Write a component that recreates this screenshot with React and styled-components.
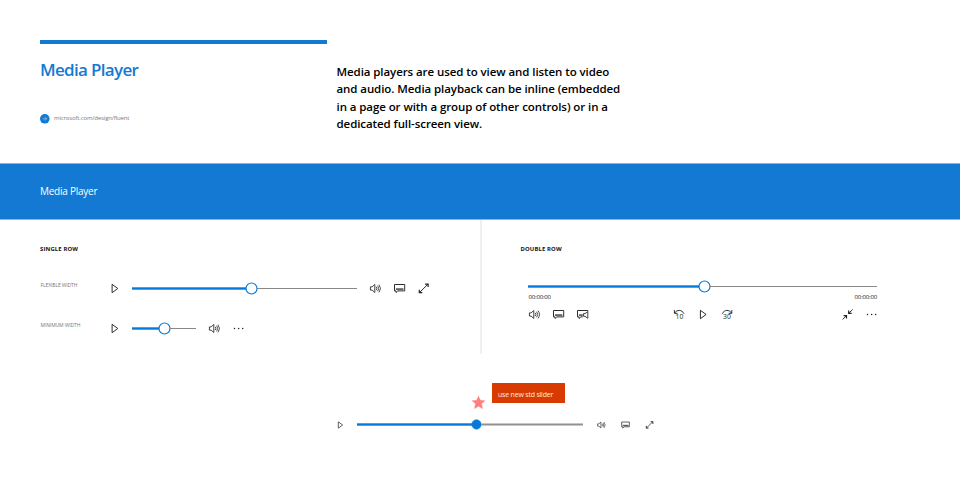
import React from "react";
import styled, { createGlobalStyle } from "styled-components";

const BLUE = "#1379d2";
const ACCENT = "#0479da";

const GlobalStyle = createGlobalStyle`
  * { box-sizing: border-box; }
  body { margin: 0; background: #fff; overflow: hidden; }
`;

const Page = styled.main`
  width: 960px;
  height: 500px;
  background: #fff;
  color: #000;
  font-family: "Open Sans", "Noto Sans", sans-serif;
`;

const Header = styled.header`
  height: 163px;
  padding: 40px 40px 0;
  display: grid;
  grid-template-columns: 287px 1fr;
  column-gap: 9.5px;
`;

const TitleColumn = styled.div`
  border-top: 4px solid ${BLUE};
  height: 84px;
`;

const Title = styled.h1`
  margin: 14px 0 0;
  font-size: 17px;
  line-height: 24px;
  font-weight: 600;
  letter-spacing: -0.68px;
  color: ${BLUE};
  white-space: nowrap;
`;

const Link = styled.div`
  display: flex;
  align-items: center;
  gap: 4px;
  margin-top: 31px;
  height: 11px;
  font-size: 6px;
  line-height: 11px;
  color: #7a7a86;
  letter-spacing: -0.15px;
`;

const LinkText = styled.span`
  margin-top: -1px;
`;

const Intro = styled.p`
  margin: 22.8px 0 0;
  font-size: 11.5px;
  line-height: 17.5px;
  font-weight: 600;
  letter-spacing: -0.08px;
`;

const Line = styled.span`
  display: block;
  white-space: nowrap;
`;

const Band = styled.div`
  height: 57px;
  padding: 0 0 1px 40px;
  background: ${BLUE};
  border: solid #82b8e7;
  border-width: 1px 0;
  color: #fff;
  display: flex;
  align-items: center;
  font-size: 10px;
  letter-spacing: -0.25px;
`;

const Columns = styled.section`
  display: grid;
  grid-template-columns: 482px 1fr;
  height: 134px;
`;

const Column = styled.div`
  padding: 23px 0 0 ${(p) => (p.$divided ? 40 : 38.5)}px;
  border-right: ${(p) => (p.$divided ? "2px solid #f0f0f0" : "0")};
`;

const Heading = styled.h2`
  margin: 0;
  height: 12px;
  font-size: 5.9px;
  line-height: 12px;
  font-weight: 700;
  letter-spacing: 0.14px;
  color: #111;
`;

const PlayerRow = styled.div`
  display: flex;
  align-items: center;
  height: 25px;
  margin-top: ${(p) => p.$top}px;
`;

const RowLabel = styled.span`
  width: 63px;
  padding-left: 0.5px;
  margin-top: -8px;
  font-size: 5px;
  line-height: 8px;
  color: #777;
  white-space: nowrap;
  letter-spacing: -0.1px;
`;

const IconButton = styled.button`
  flex: none;
  width: 24px;
  height: 25px;
  padding: 0;
  border: 0;
  background: none;
  color: #222;
  display: grid;
  place-items: center;
  svg { display: block; overflow: visible; }
`;

const Track = styled.div`
  display: flex;
  align-items: center;
  height: 13px;
  width: ${(p) => p.$width}px;
  margin: 0 ${(p) => p.$after || 0}px 0 ${(p) => p.$before || 0}px;
`;

const Filled = styled.div`
  width: ${(p) => p.$width}px;
  height: 3px;
  background: ${ACCENT};
  border: solid #4fa1e5;
  border-width: 1px 0;
`;

const Rest = styled.div`
  flex: 1;
  height: ${(p) => (p.$thick ? 3 : 1)}px;
  background: ${(p) => (p.$thick ? "#929292" : "#888")};
  border: solid #c6c6c6;
  border-width: ${(p) => (p.$thick ? "1px 0" : 0)};
`;

const Handle = styled.span`
  flex: none;
  width: ${(p) => (p.$solid ? 9 : 11)}px;
  svg {
    display: block;
    margin-left: ${(p) => (p.$solid ? -2 : -1)}px;
  }
`;

const DoubleRow = styled.div`
  width: 349px;
  margin: 25px 0 0 7.5px;
`;

const Times = styled.div`
  display: flex;
  justify-content: space-between;
  height: 9px;
  padding-left: 0.5px;
  font-size: 6px;
  line-height: 8px;
  color: #111;
  letter-spacing: -0.17px;
`;

const Controls = styled.div`
  display: grid;
  grid-template-columns: 144.6px 1fr 48px;
  margin: 0 -6px;
`;

const Group = styled.div`
  display: flex;
`;

const Demo = styled.section`
  padding: 29px 0 0 328.5px;
`;

const Note = styled.div`
  display: flex;
  align-items: flex-start;
  height: 29px;
  padding-left: 143.5px;
  gap: 7px;
`;

const StarHolder = styled.span`
  display: block;
  margin-top: 13px;
  width: 13px;
  height: 13px;
  svg { display: block; }
`;

const NoteText = styled.span`
  width: 73px;
  height: 20px;
  padding-left: 6px;
  background: #d83b01;
  border-radius: 0.5px;
  color: #ffe9e0;
  font-size: 7px;
  line-height: 23px;
  letter-spacing: -0.2px;
  white-space: nowrap;
`;

const Svg = ({ size = 12, shift = 0.6, children }) => (
  <svg
    width={size}
    height={size + 1}
    viewBox={`${-shift} ${-6 / size} 12 ${12 + 12 / size}`}
    fill="none"
    stroke="currentColor"
    strokeWidth="0.95"
  >
    {children}
  </svg>
);

const PlayIcon = (p) => (
  <Svg {...p}><path d="M3.1 1.8v8.4L8.8 6z" /></Svg>
);

const VolumeIcon = (p) => (
  <Svg {...p}>
    <path d="M.8 4.4h1.7L5.2 2v8L2.5 7.6H.8z" strokeWidth="0.85" />
    <path d="M6.7 4.4q1.2 1.6 0 3.2M8 3.2q2.2 2.8 0 5.6M9.4 2.1q3 3.9 0 7.8" strokeWidth="0.8" />
  </Svg>
);

const CaptionIcon = (p) => (
  <Svg {...p}>
    <path d="M.9 2h10.2v6.4H4.2L2.4 10V8.4H.9z" />
    <path d="M2.3 6.6h7.5" strokeWidth="1.7" opacity="0.75" />
  </Svg>
);

const CaptionAudioIcon = (p) => (
  <Svg {...p}>
    <path d="M11.2 3V2H.9v6.4h1.5V10l1.8-1.6h2" />
    <path d="M2.3 6.6h3.9" strokeWidth="1.7" opacity="0.75" />
    <path d="M7 5h1.5l2.7-1.8v6.6L8.5 7.9H7z" strokeWidth="0.85" />
  </Svg>
);

const ExpandIcon = (p) => (
  <Svg {...p}>
    <path d="M1.9 10.1l8.4-8.4" />
    <path d="M7.5 1.6h3v3M1.7 7.2v3h3" strokeWidth="1.2" />
  </Svg>
);

const ShrinkIcon = (p) => (
  <Svg {...p}>
    <path d="M1 11l3.7-3.7M7.3 4.7L11 1" />
    <path d="M2 7.1h2.9V10M7.1 2v2.9H10" strokeWidth="1.2" />
  </Svg>
);

const MoreIcon = (p) => (
  <Svg {...p}>
    <g fill="currentColor" stroke="none">
      <circle cx="1.9" cy="6" r="0.75" />
      <circle cx="6" cy="6" r="0.75" />
      <circle cx="10.1" cy="6" r="0.75" />
    </g>
  </Svg>
);

const SeekLabel = styled.text`
  font: 6.8px "Open Sans", sans-serif;
  fill: currentColor;
  stroke: none;
`;

const BackIcon = (p) => (
  <Svg {...p}>
    <path d="M1.7 4.5C3.8.9 9.1 1 10.9 5.2M1.4 1.6v3.2h3.1" />
    <SeekLabel x="6.4" y="10.8" textAnchor="middle">10</SeekLabel>
  </Svg>
);

const ForwardIcon = (p) => (
  <Svg {...p}>
    <path d="M10.3 4.5C8.2.9 2.9 1 1.1 5.2M10.6 1.6v3.2H7.5" />
    <SeekLabel x="5.8" y="10.8" textAnchor="middle">30</SeekLabel>
  </Svg>
);

const ArrowBadge = () => (
  <svg width="10" height="10" viewBox="0 0 10 10">
    <circle cx="4.8" cy="4.8" r="4.8" fill={BLUE} />
    <path d="M2.6 4.8h4.1M5 3.1l1.7 1.7L5 6.5" fill="none" stroke="#b8d9f5" strokeWidth="0.6" />
  </svg>
);

const Star = () => (
  <svg width="13" height="13" viewBox="0 0 13 13">
    <path d="M6.5.2l1.9 4.1 4.5.4-3.4 3 1 4.9-4-2.4-4 2.4 1-4.9L.1 4.7l4.5-.4z" fill="#ff7f7f" stroke="#ff7f7f" strokeWidth="0.4" />
  </svg>
);

const Thumb = ({ solid }) => (
  <svg width="13" height="13" viewBox="0 0 13 13">
    <circle
      cx="6.5"
      cy="6.5"
      r={solid ? 4.7 : 5.5}
      fill={solid ? ACCENT : "#fff"}
      stroke={ACCENT}
      strokeWidth={solid ? 0.6 : 1.2}
    />
  </svg>
);

const Button = ({ label, icon: Icon, size, shift }) => (
  <IconButton aria-label={label}><Icon size={size} shift={shift} /></IconButton>
);

const Slider = ({ width, filled, before, after, solid }) => (
  <Track $width={width} $before={before} $after={after}>
    <Filled $width={filled} />
    <Handle $solid={solid}><Thumb solid={solid} /></Handle>
    <Rest $thick={solid} />
  </Track>
);

export default function App() {
  return (
    <Page>
      <GlobalStyle />
      <Header>
        <TitleColumn>
          <Title>Media Player</Title>
          <Link><ArrowBadge /><LinkText>microsoft.com/design/fluent</LinkText></Link>
        </TitleColumn>
        <Intro>
          <Line>Media players are used to view and listen to video</Line>
          <Line>and audio. Media playback can be inline (embedded</Line>
          <Line>in a page or with a group of other controls) or in a</Line>
          <Line>dedicated full-screen view.</Line>
        </Intro>
      </Header>
      <Band>Media Player</Band>
      <Columns>
        <Column $divided>
          <Heading>SINGLE ROW</Heading>
          <PlayerRow $top={21}>
            <RowLabel>FLEXIBLE WIDTH</RowLabel>
            <Button label="Play" icon={PlayIcon} shift={0} />
            <Slider width={225.5} filled={114} before={4.6} after={6.4} />
            <Button label="Volume" icon={VolumeIcon} />
            <Button label="Captions" icon={CaptionIcon} />
            <Button label="Full screen" icon={ExpandIcon} />
          </PlayerRow>
          <PlayerRow $top={15}>
            <RowLabel>MINIMUM WIDTH</RowLabel>
            <Button label="Play" icon={PlayIcon} shift={0} />
            <Slider width={64} filled={27} before={5.4} after={6} />
            <Button label="Volume" icon={VolumeIcon} />
            <Button label="More" icon={MoreIcon} />
          </PlayerRow>
        </Column>
        <Column>
          <Heading>DOUBLE ROW</Heading>
          <DoubleRow>
            <Slider width={349} filled={170.6} />
            <Times><span>00:00:00</span><span>00:00:00</span></Times>
            <Controls>
              <Group>
                <Button label="Volume" icon={VolumeIcon} />
                <Button label="Captions" icon={CaptionIcon} />
                <Button label="Audio captions" icon={CaptionAudioIcon} />
              </Group>
              <Group>
                <Button label="Back 10 seconds" icon={BackIcon} shift={0} />
                <Button label="Play" icon={PlayIcon} shift={0.3} />
                <Button label="Forward 30 seconds" icon={ForwardIcon} shift={0.2} />
              </Group>
              <Group>
                <Button label="Exit full screen" icon={ShrinkIcon} />
                <Button label="More" icon={MoreIcon} />
              </Group>
            </Controls>
          </DoubleRow>
        </Column>
      </Columns>
      <Demo>
        <Note><StarHolder><Star /></StarHolder><NoteText>use new std slider</NoteText></Note>
        <PlayerRow $top={0}>
          <Button label="Play" icon={PlayIcon} size={9} shift={0} />
          <Slider width={226} filled={114.4} before={4.9} after={6.1} solid />
          <Button label="Volume" icon={VolumeIcon} size={9} shift={0} />
          <Button label="Captions" icon={CaptionIcon} size={9} shift={0} />
          <Button label="Full screen" icon={ExpandIcon} size={9} shift={0} />
        </PlayerRow>
      </Demo>
    </Page>
  );
}
